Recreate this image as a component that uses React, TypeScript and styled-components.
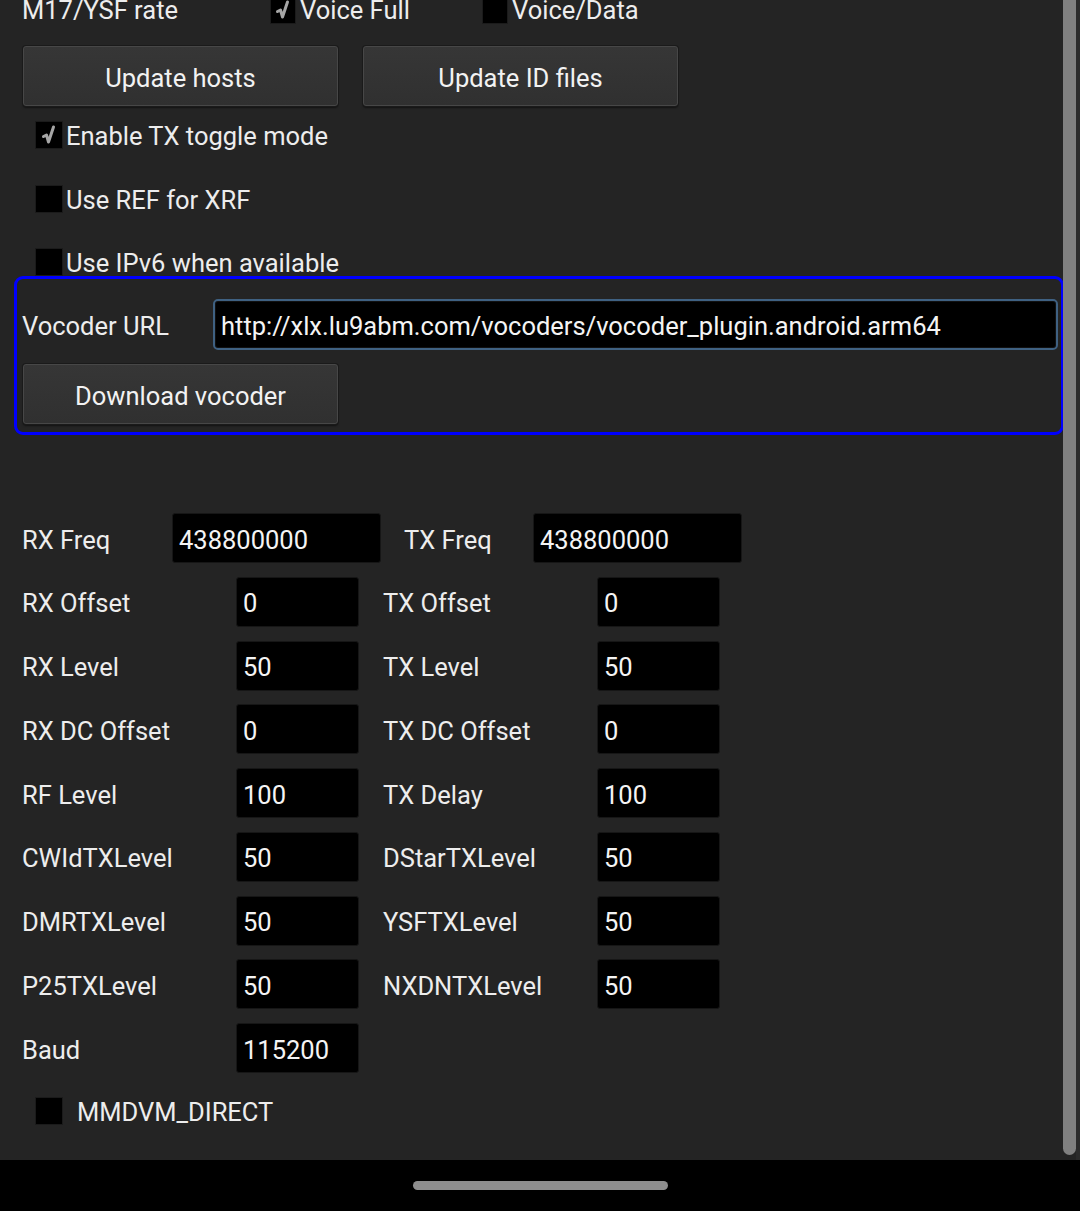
import React from "react";
import styled, { createGlobalStyle } from "styled-components";

const Global = createGlobalStyle`
  html, body { margin: 0; padding: 0; background: #000; }
  body { font-family: Roboto, "Noto Sans", "Liberation Sans", sans-serif; }
  * { box-sizing: border-box; }
`;

const Screen = styled.div`
  width: 1080px;
  height: 1211px;
  display: flex;
  flex-direction: column;
  background: #242424;
  color: #ededed;
  font-size: 25.5px;
  position: relative;
  overflow: hidden;
`;

const Viewport = styled.div`
  flex: 1;
  overflow: hidden;
  position: relative;
`;

const Content = styled.div`
  display: flex;
  flex-direction: column;
  margin-top: -5px;
`;

const TopRow = styled.div`
  height: 28px;
  display: grid;
  grid-template-columns: 248px 212px auto;
  align-items: center;
  padding-left: 22px;
  padding-bottom: 3px;
`;

const InlineCheck = styled.div`
  display: flex;
  align-items: center;
  gap: 4px;
`;

const Box = styled.span<{ $size?: number }>`
  width: ${(p) => p.$size ?? 28}px;
  height: 28px;
  background: #000;
  border: 1px solid #1b1b1b;
  display: inline-flex;
  align-items: center;
  justify-content: center;
  flex: none;
`;

const ButtonRow = styled.div`
  display: flex;
  gap: 25px;
  padding-left: 23px;
  margin-top: 23px;
`;

const Button = styled.button`
  width: 315px;
  height: 60px;
  background: linear-gradient(#363636, #303030);
  border: 1px solid #474747;
  border-radius: 3px;
  box-shadow: 0 0 0 1px #1a1a1a, 0 2px 2px rgba(0, 0, 0, 0.5);
  color: #f2f2f2;
  font-family: Roboto, "Noto Sans", sans-serif;
  font-size: 25.5px;
  padding: 3px 0 0;
`;

const CheckRow = styled.label<{ $gap?: number; $top: number }>`
  display: flex;
  align-items: center;
  gap: ${(p) => p.$gap ?? 3}px;
  padding-left: 35px;
  margin-top: ${(p) => p.$top}px;
  height: 28px;
`;

const CheckText = styled.span`
  padding-top: 2px;
`;

const VocoderPanel = styled.section`
  margin-left: 14px;
  width: 1050px;
  height: 159px;
  flex: none;
  border: 3px solid #0000ff;
  border-radius: 9px;
  padding: 20px 3px 0 5px;
  display: flex;
  flex-direction: column;
  gap: 14px;
`;

const UrlRow = styled.div`
  display: flex;
  align-items: center;
  height: 51px;
`;

const UrlLabel = styled.span`
  width: 191px;
  flex: none;
  padding-top: 3px;
`;

const UrlInput = styled.div`
  flex: 1;
  height: 51px;
  background: #000;
  border: 2px solid #3f6182;
  border-radius: 5px;
  box-shadow: inset 0 0 0 1px #111;
  display: flex;
  align-items: center;
  padding: 3px 0 0 6px;
  color: #f4f4f4;
`;

const PanelButton = styled(Button)`
  margin-left: 1px;
`;

const Fields = styled.div`
  margin-top: 78px;
  display: flex;
  flex-direction: column;
  gap: 13.75px;
  padding-left: 22px;
`;

const FieldRow = styled.div<{ $cols: string }>`
  display: grid;
  grid-template-columns: ${(p) => p.$cols};
  align-items: center;
  height: 50px;
`;

const FieldLabel = styled.span<{ $lead?: number }>`
  padding-left: ${(p) => p.$lead ?? 0}px;
  padding-top: 3px;
  white-space: nowrap;
`;

const FieldInput = styled.div`
  height: 50px;
  background: #000;
  border: 1px solid #161616;
  border-radius: 3px;
  display: flex;
  align-items: center;
  padding: 3px 0 0 6px;
  color: #f4f4f4;
`;

const Scrollbar = styled.div`
  position: absolute;
  top: 0;
  left: 1063px;
  width: 13px;
  height: 1155px;
  background: #808080;
  border-radius: 0 0 7px 7px;
`;

const ScrollTrack = styled.div`
  position: absolute;
  top: 0;
  left: 1076px;
  width: 4px;
  height: 1160px;
  background: #2b2b2b;
`;

const NavBar = styled.div`
  height: 51px;
  background: #000;
  display: flex;
  justify-content: center;
  padding-top: 21px;
`;

const Handle = styled.div`
  width: 255px;
  height: 9px;
  border-radius: 5px;
  background: #8e8e8e;
`;

const Tick = () => (
  <svg width="16" height="20" viewBox="0 0 16 20">
    <path d="M2.5 11.5 L5.5 10 L7.5 17 L12.5 2" fill="none" stroke="#a6a6a6" strokeWidth="3" strokeLinejoin="round" strokeLinecap="round" />
  </svg>
);

type Field = { label: string; value: string };

const rows: [Field, Field | null][] = [
  [{ label: "RX Offset", value: "0" }, { label: "TX Offset", value: "0" }],
  [{ label: "RX Level", value: "50" }, { label: "TX Level", value: "50" }],
  [{ label: "RX DC Offset", value: "0" }, { label: "TX DC Offset", value: "0" }],
  [{ label: "RF Level", value: "100" }, { label: "TX Delay", value: "100" }],
  [{ label: "CWIdTXLevel", value: "50" }, { label: "DStarTXLevel", value: "50" }],
  [{ label: "DMRTXLevel", value: "50" }, { label: "YSFTXLevel", value: "50" }],
  [{ label: "P25TXLevel", value: "50" }, { label: "NXDNTXLevel", value: "50" }],
  [{ label: "Baud", value: "115200" }, null],
];

export default function App() {
  return (
    <Screen>
      <Global />
      <Viewport>
        <Content>
          <TopRow>
            <span>M17/YSF rate</span>
            <InlineCheck>
              <Box $size={26}>
                <Tick />
              </Box>
              <span>Voice Full</span>
            </InlineCheck>
            <InlineCheck>
              <Box $size={26} />
              <span>Voice/Data</span>
            </InlineCheck>
          </TopRow>

          <ButtonRow>
            <Button>Update hosts</Button>
            <Button>Update ID files</Button>
          </ButtonRow>

          <CheckRow $top={15}>
            <Box>
              <Tick />
            </Box>
            <CheckText>Enable TX toggle mode</CheckText>
          </CheckRow>
          <CheckRow $top={36}>
            <Box />
            <CheckText>Use REF for XRF</CheckText>
          </CheckRow>
          <CheckRow $top={35}>
            <Box />
            <CheckText>Use IPv6 when available</CheckText>
          </CheckRow>

          <VocoderPanel>
            <UrlRow>
              <UrlLabel>Vocoder URL</UrlLabel>
              <UrlInput>http://xlx.lu9abm.com/vocoders/vocoder_plugin.android.arm64</UrlInput>
            </UrlRow>
            <PanelButton>Download vocoder</PanelButton>
          </VocoderPanel>

          <Fields>
            <FieldRow $cols="150px 209px 152px 209px">
              <FieldLabel>RX Freq</FieldLabel>
              <FieldInput>438800000</FieldInput>
              <FieldLabel $lead={23}>TX Freq</FieldLabel>
              <FieldInput>438800000</FieldInput>
            </FieldRow>
            {rows.map(([a, b]) => (
              <FieldRow key={a.label} $cols="214px 123px 238px 123px">
                <FieldLabel>{a.label}</FieldLabel>
                <FieldInput>{a.value}</FieldInput>
                {b && <FieldLabel $lead={24}>{b.label}</FieldLabel>}
                {b && <FieldInput>{b.value}</FieldInput>}
              </FieldRow>
            ))}
          </Fields>

          <CheckRow $top={24} $gap={14}>
            <Box />
            <CheckText>MMDVM_DIRECT</CheckText>
          </CheckRow>
        </Content>
        <ScrollTrack />
        <Scrollbar />
      </Viewport>
      <NavBar>
        <Handle />
      </NavBar>
    </Screen>
  );
}
